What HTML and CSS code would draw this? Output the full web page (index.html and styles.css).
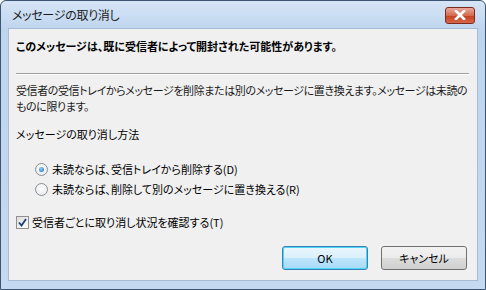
FILE: index.html
```html
<!DOCTYPE html>
<html lang="ja">
<head>
    <meta charset="UTF-8">
    <title>メッセージの取り消し</title>
    <link rel="stylesheet" href="styles.css">
</head>
<body>
    <div class="window">
        <div class="titlebar">
            <span class="title">メッセージの取り消し</span>
            <span class="close">
                <svg width="12" height="10" viewBox="0 0 12 10">
                    <path d="M2 1 L10 9 M10 1 L2 9" stroke="#fff" stroke-width="2.6" stroke-linecap="square"/>
                </svg>
            </span>
        </div>
        <div class="client">
            <p class="heading">このメッセージは、既に受信者によって開封された可能性があります。</p>
            <hr class="sep">
            <p class="desc">受信者の受信トレイからメッセージを削除または別のメッセージに置き換えます。メッセージは未読のものに限ります。</p>
            <p class="label">メッセージの取り消し方法</p>
            <div class="options">
                <label class="option"><span class="radio checked"></span>未読ならば、受信トレイから削除する(D)</label>
                <label class="option"><span class="radio"></span>未読ならば、削除して別のメッセージに置き換える(R)</label>
            </div>
            <label class="check-row"><span class="checkbox">
                <svg width="9" height="9" viewBox="0 0 9 9">
                    <path d="M1 4.5 L3.5 7.5 L8 1" fill="none" stroke="#1c3f7a" stroke-width="1.8"/>
                </svg>
            </span>受信者ごとに取り消し状況を確認する(T)</label>
            <div class="buttons">
                <button class="btn default">OK</button>
                <button class="btn">キャンセル</button>
            </div>
        </div>
    </div>
</body>
</html>
```

FILE: styles.css
```css
body {
    margin: 0;
    background: #ffffff;
    font-family: "Noto Sans CJK JP", "Noto Sans", sans-serif;
    font-feature-settings: "palt";
    font-size: 11px;
    color: #000;
}
.window {
    width: 486px;
    height: 290px;
    box-sizing: border-box;
    border: 1px solid #3b5573;
    border-radius: 6px 6px 0 0;
    background: linear-gradient(#d6e5f6, #bfd5ee 28px, #c5d9f0);
    display: flex;
    flex-direction: column;
}
.titlebar {
    height: 27px;
    flex: none;
    display: flex;
    align-items: center;
    justify-content: space-between;
    padding: 0 10px 0 11px;
}
.title {
    font-size: 12px;
    color: #1b1b1b;
    letter-spacing: -0.3px;
}
.close {
    width: 30px;
    height: 17px;
    margin-top: 1px;
    box-sizing: border-box;
    border: 1px solid #7d2b1f;
    border-radius: 3px;
    background: linear-gradient(#e9a99b, #d46a51 50%, #c4401f 51%, #d8664a);
    display: flex;
    align-items: center;
    justify-content: center;
}
.client {
    flex: 1;
    margin: 0 7px 8px 7px;
    border: 1px solid #a6bcd6;
    background: #f0f0f0;
    padding: 0 8px 0 7px;
    display: flex;
    flex-direction: column;
}
p { margin: 0; }
.heading {
    font-weight: bold;
    margin-top: 9px;
    line-height: 16px;
}
.sep {
    border: 0;
    border-top: 1px solid #a0a0a0;
    border-bottom: 1px solid #ffffff;
    margin: 19px 0 7px 0;
}
.desc {
    line-height: 16px;
    color: #1a1a1a;
    letter-spacing: -0.4px;
}
.label {
    margin-top: 12px;
    line-height: 16px;
}
.options {
    margin: 19px 0 0 19px;
    display: flex;
    flex-direction: column;
    gap: 4px;
}
.option, .check-row {
    display: flex;
    align-items: center;
    gap: 4px;
    line-height: 16px;
}
.radio {
    width: 11px;
    height: 11px;
    border: 1px solid #8c8f94;
    border-radius: 50%;
    background: radial-gradient(circle at 50% 40%, #ffffff, #e2e4e8);
    position: relative;
}
.radio.checked::after {
    content: "";
    position: absolute;
    left: 3px;
    top: 3px;
    width: 5px;
    height: 5px;
    border-radius: 50%;
    background: radial-gradient(circle at 40% 35%, #8fd2ff, #1b66b8);
}
.check-row {
    margin-top: 17px;
    gap: 3px;
}
.checkbox {
    width: 11px;
    height: 11px;
    border: 1px solid #8e8f8f;
    background: linear-gradient(135deg, #dcdcdc, #ffffff);
    display: flex;
    align-items: center;
    justify-content: center;
}
.buttons {
    margin-top: auto;
    margin-bottom: 10px;
    display: flex;
    justify-content: flex-end;
    gap: 13px;
    padding-right: 2px;
}
.btn {
    width: 86px;
    height: 24px;
    border: 1px solid #707070;
    border-radius: 3px;
    background: linear-gradient(#f2f2f2, #ebebeb 50%, #dddddd 51%, #cfcfcf);
    font-family: inherit;
    font-feature-settings: "palt";
    font-size: 11px;
    color: #000;
    padding: 0;
}
.btn.default {
    border-color: #3c7fb1;
    box-shadow: inset 0 0 0 1px #48d8fb;
    background: linear-gradient(#eaf6fd, #d9f0fc 50%, #bee6fd 51%, #a7d9f5);
}
```
